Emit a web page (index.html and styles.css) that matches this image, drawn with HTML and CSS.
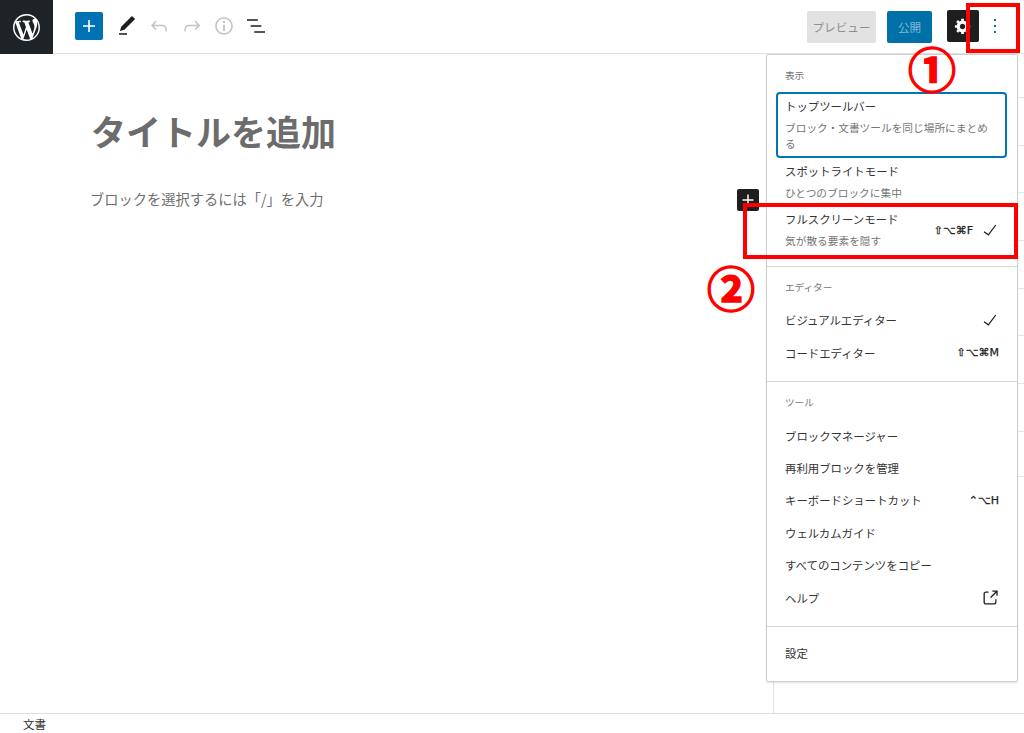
FILE: index.html
```html
<!DOCTYPE html>
<html lang="ja">
<head>
<meta charset="utf-8">
<title>エディター</title>
<link rel="stylesheet" href="styles.css">
</head>
<body>
<div class="page">
  <header class="topbar">
    <div class="logo"><svg class="logo-svg" viewBox="0 0 20 20"><path d="M20 10c0-5.51-4.49-10-10-10C4.48 0 0 4.49 0 10c0 5.52 4.48 10 10 10 5.51 0 10-4.48 10-10zM7.78 15.37L4.37 6.22c.55-.02 1.17-.08 1.17-.08.5-.06.44-1.13-.06-1.11 0 0-1.45.11-2.37.11-.18 0-.37 0-.58-.01C4.12 2.69 6.87 1.11 10 1.11c2.33 0 4.45.87 6.05 2.34-.68-.11-1.65.39-1.65 1.58 0 .74.45 1.36.9 2.1.35.61.55 1.36.55 2.46 0 1.49-1.4 5-1.4 5l-3.03-8.37c.54-.02.82-.17.82-.17.5-.05.44-1.25-.06-1.22 0 0-1.44.12-2.38.12-.87 0-2.33-.12-2.33-.12-.5-.03-.56 1.2-.06 1.22l.92.08 1.26 3.41zM17.41 10c.24-.64.74-1.87.43-4.25.7 1.29 1.05 2.71 1.05 4.25 0 3.29-1.73 6.24-4.4 7.78.97-2.59 1.94-5.2 2.92-7.78zM6.1 18.09C3.12 16.65 1.11 13.53 1.11 10c0-1.3.23-2.48.72-3.59C3.25 10.3 4.67 14.2 6.1 18.09zm4.03-6.63l2.58 6.98c-.86.29-1.76.45-2.71.45-.79 0-1.57-.11-2.29-.33.81-2.38 1.62-4.74 2.42-7.1z"/></svg></div>
    <div class="tools">
      <div class="add"><svg class="icon" viewBox="0 0 24 24"><path d="M18 11.2h-5.2V6h-1.6v5.2H6v1.6h5.2V18h1.6v-5.2H18z"/></svg></div>
      <div class="tool"><svg class="icon" viewBox="0 0 24 24"><path d="M20.1 5.1L16.9 2 6.2 12.7l-1.3 4.4 4.5-1.3L20.1 5.1zM4 20.8h8v-1.5H4v1.5z"/></svg></div>
      <div class="tool off"><svg class="icon" viewBox="0 0 24 24"><path d="M18.3 11.7c-.6-.6-1.4-.9-2.3-.9H6.7l2.9-3.3-1.1-1-4.5 5L8.5 16l1-1-2.7-2.7H16c.5 0 .9.2 1.3.5 1 1 1 3.4 1 4.5v.3h1.5v-.2c0-1.5 0-4.3-1.5-5.7z"/></svg></div>
      <div class="tool off"><svg class="icon" viewBox="0 0 24 24"><path d="M15.6 6.5l-1.1 1 2.9 3.3H8c-.9 0-1.7.3-2.3.9-1.4 1.5-1.4 4.2-1.4 5.6v.2h1.5v-.3c0-1.1 0-3.5 1-4.5.3-.3.7-.5 1.3-.5h9.2L14.5 15l1.1 1.1 4.6-4.6-4.6-5z"/></svg></div>
      <div class="tool off"><svg class="icon" viewBox="0 0 24 24"><path d="M12 3.2c-4.8 0-8.8 3.9-8.8 8.8 0 4.8 3.9 8.8 8.8 8.8 4.8 0 8.8-3.9 8.8-8.8 0-4.8-4-8.8-8.8-8.8zm0 16c-4 0-7.2-3.3-7.2-7.2C4.8 8 8 4.8 12 4.8s7.2 3.3 7.2 7.2c0 4-3.2 7.2-7.2 7.2zM11 17h2v-6h-2v6zm0-8h2V7h-2v2z"/></svg></div>
      <div class="tool"><svg class="icon" viewBox="0 0 24 24"><path d="M13.8 5.2H3v1.5h10.8V5.2zm-3.6 12v1.5H21v-1.5H10.2zm7.2-6H6.6v1.5h10.8v-1.5z"/></svg></div>
    </div>
    <div class="actions">
      <div class="btn preview">プレビュー</div>
      <div class="btn publish">公開</div>
      <div class="square dark"><svg class="cog" viewBox="0 0 20 20"><path d="M18 12h-2.18c-.17.7-.44 1.35-.81 1.93l1.54 1.54-2.1 2.1-1.54-1.54c-.58.36-1.23.63-1.91.79V19H8v-2.18c-.68-.16-1.33-.43-1.91-.79l-1.54 1.54-2.12-2.12 1.54-1.54c-.36-.58-.63-1.23-.79-1.91H1V9.03h2.17c.16-.7.44-1.35.8-1.94L2.43 5.55l2.1-2.1 1.54 1.54c.58-.37 1.24-.64 1.93-.81V2h3v2.18c.68.16 1.33.43 1.91.79l1.54-1.54 2.12 2.12-1.54 1.54c.36.59.64 1.24.8 1.94H18V12zm-8.5 1.5c1.66 0 3-1.34 3-3s-1.34-3-3-3-3 1.34-3 3 1.34 3 3 3z"/></svg></div>
      <div class="square more"><svg class="icon" viewBox="0 0 24 24"><path d="M13 19h-2v-2h2v2zm0-6h-2v-2h2v2zm0-6h-2V5h2v2z"/></svg></div>
    </div>
  </header>

  <div class="body">
    <main class="editor">
      <h1 class="post-title">タイトルを追加</h1>
      <p class="placeholder">ブロックを選択するには「/」を入力</p>
      <div class="block-add"><svg class="icon" viewBox="0 0 24 24"><path d="M18 11.2h-5.2V6h-1.6v5.2H6v1.6h5.2V18h1.6v-5.2H18z"/></svg></div>
    </main>
    <aside class="sidebar">
      <div class="row first"></div>
      <div class="row"></div>
      <div class="row"></div>
      <div class="row"></div>
      <div class="row"></div>
      <div class="row"></div>
      <div class="row"></div>
      <div class="row"></div>
      <div class="row last"></div>
    </aside>
  </div>

  <footer class="status">文書</footer>

  <nav class="menu">
    <section class="group view">
      <div class="label">表示</div>
      <div class="opt focused">
        <div class="opt-text"><div class="opt-title">トップツールバー</div><div class="opt-desc">ブロック・文書ツールを同じ場所にまとめる</div></div>
      </div>
      <div class="opt">
        <div class="opt-text"><div class="opt-title">スポットライトモード</div><div class="opt-desc">ひとつのブロックに集中</div></div>
      </div>
      <div class="opt">
        <div class="opt-text"><div class="opt-title">フルスクリーンモード</div><div class="opt-desc">気が散る要素を隠す</div></div>
        <span class="keys">⇧⌥⌘F</span>
        <svg class="check" viewBox="0 0 24 24"><path d="M18.3 5.6L9.9 16.9l-4.6-3.4-.9 1.2 5.8 4.3 9.3-12.6z"/></svg>
      </div>
    </section>
    <section class="group">
      <div class="label">エディター</div>
      <div class="item"><span>ビジュアルエディター</span><svg class="check" viewBox="0 0 24 24"><path d="M18.3 5.6L9.9 16.9l-4.6-3.4-.9 1.2 5.8 4.3 9.3-12.6z"/></svg></div>
      <div class="item"><span>コードエディター</span><span class="keys">⇧⌥⌘M</span></div>
    </section>
    <section class="group tool-group">
      <div class="label">ツール</div>
      <div class="item"><span>ブロックマネージャー</span></div>
      <div class="item"><span>再利用ブロックを管理</span></div>
      <div class="item"><span>キーボードショートカット</span><span class="keys">⌃⌥H</span></div>
      <div class="item"><span>ウェルカムガイド</span></div>
      <div class="item"><span>すべてのコンテンツをコピー</span></div>
      <div class="item"><span>ヘルプ</span><svg class="ext" viewBox="0 0 24 24"><path d="M18.2 17c0 .7-.6 1.2-1.2 1.2H7c-.7 0-1.2-.6-1.2-1.2V7c0-.7.6-1.2 1.2-1.2h3.2V4.2H7C5.5 4.2 4.2 5.5 4.2 7v10c0 1.5 1.2 2.8 2.8 2.8h10c1.5 0 2.8-1.2 2.8-2.8v-3.6h-1.5V17zM14.9 3v1.5h3.7l-6.4 6.4 1.1 1.1 6.4-6.4v3.7h1.5V3h-6.3z"/></svg></div>
    </section>
    <section class="group end">
      <div class="item"><span>設定</span></div>
    </section>
  </nav>

  <div class="mark mark-more"></div>
  <div class="mark mark-full"></div>
  <div class="num num-1">①</div>
  <div class="num num-2">②</div>
</div>
</body>
</html>
```

FILE: styles.css
```css
* { box-sizing: border-box; }
html, body { margin: 0; padding: 0; background: #fff; }
body {
  font-family: "Noto Sans CJK JP", "Noto Sans", sans-serif;
  color: #1e1e1e;
  overflow: hidden;
}
.page {
  position: relative;
  width: 1024px;
  height: 733px;
  display: flex;
  flex-direction: column;
  overflow: hidden;
}

/* top bar */
.topbar {
  height: 54px;
  flex: none;
  display: flex;
  align-items: flex-start;
  border-bottom: 1px solid #e0e0e0;
}
.logo {
  width: 53px;
  height: 54px;
  background: #1d2327;
  display: flex;
  align-items: center;
  justify-content: center;
  margin-bottom: -1px;
}
.logo-svg { width: 27px; height: 27px; fill: #fff; }
.icon { width: 24px; height: 24px; fill: currentColor; display: block; }
.tools {
  display: flex;
  align-items: center;
  height: 52px;
  padding-left: 22px;
}
.add {
  width: 28px;
  height: 28px;
  margin-right: 8px;
  background: #0071b3;
  color: #fff;
  border-radius: 2px;
  display: flex;
  align-items: center;
  justify-content: center;
}
.tool {
  width: 32.3px;
  height: 32px;
  display: flex;
  align-items: center;
  justify-content: center;
  color: #1e1e1e;
}
.tool.off { color: #c4c4c4; }
.actions {
  margin-left: auto;
  display: flex;
  align-items: center;
  height: 53px;
  padding-right: 13px;
}
.btn {
  height: 32px;
  border-radius: 2px;
  font-size: 11.6px;
  display: flex;
  align-items: center;
  justify-content: center;
}
.preview {
  width: 69px;
  margin-right: 11px;
  background: #e2e2e2;
  color: #8f8f8f;
}
.publish {
  width: 45px;
  margin-right: 15px;
  background: #0071a8;
  color: #82b7d4;
}
.square {
  width: 32px;
  height: 32px;
  border-radius: 2px;
  display: flex;
  align-items: center;
  justify-content: center;
}
.dark { background: #1e1e1e; color: #fff; margin-top: -2px; }
.cog { width: 18px; height: 18px; fill: #fff; }
.more { color: #0075b0; margin-top: -2px; }

/* body */
.body { flex: 1; display: flex; min-height: 0; }
.editor {
  position: relative;
  flex: 1;
  padding: 52px 0 0 91px;
}
.post-title {
  margin: 0;
  font-size: 35px;
  line-height: 50px;
  font-weight: 700;
  color: #6c6c6c;
}
.placeholder {
  margin: 33px 0 0 -1px;
  font-size: 14.25px;
  line-height: 20px;
  color: #6f6f6f;
}
.block-add {
  position: absolute;
  left: 737px;
  top: 135px;
  width: 22px;
  height: 22px;
  background: #1e1e1e;
  color: #fff;
  border-radius: 2px;
  display: flex;
  align-items: center;
  justify-content: center;
}
.sidebar {
  width: 251px;
  flex: none;
  border-left: 1px solid #e0e0e0;
}
.row { height: 47.7px; border-bottom: 1px solid #e6e6e6; }
.row.first { height: 44px; }
.row.last { height: 45px; }

/* status bar */
.status {
  height: 20px;
  flex: none;
  border-top: 1px solid #e0e0e0;
  padding-left: 23px;
  font-size: 11.5px;
  line-height: 21px;
  color: #333;
}

/* options menu */
.menu {
  position: absolute;
  left: 766px;
  top: 54px;
  width: 252px;
  height: 628px;
  background: #fff;
  border: 1px solid #d0d0d0;
  border-radius: 2px;
  box-shadow: 0 1px 2px rgba(0, 0, 0, .12);
}
.group {
  padding: 13px 10px 12px 9px;
  border-bottom: 1px solid #d6d6d6;
}
.group.end { border-bottom: 0; padding-top: 10px; }
.label {
  padding-left: 9px;
  margin-bottom: 10px;
  font-size: 9.6px;
  line-height: 14px;
  color: #757575;
}
.tool-group .label { margin-bottom: 10.6px; }
.opt {
  display: flex;
  align-items: center;
  height: 48px;
  padding: 0 9px;
}
.opt.focused {
  height: 66px;
  border: 2px solid #0076b4;
  border-radius: 4px;
  padding: 0 7px;
}
.opt-text { flex: 1; min-width: 0; }
.opt-title { font-size: 11.4px; line-height: 16px; color: #333; }
.opt-desc { margin-top: 6px; font-size: 10.7px; line-height: 16px; color: #757575; }
.item {
  height: 32.4px;
  display: flex;
  align-items: center;
  justify-content: space-between;
  padding: 0 9px;
  font-size: 11.4px;
  color: #333;
}
.keys {
  font-family: "DejaVu Sans", sans-serif;
  font-size: 11px;
  font-weight: 400;
  color: #222;
  white-space: nowrap;
  -webkit-text-stroke: .25px #222;
  margin-right: -1px;
}
.check { width: 20px; height: 20px; fill: #1e1e1e; flex: none; margin-left: 8px; margin-right: -2px; }
.ext { width: 20px; height: 20px; fill: #1e1e1e; flex: none; margin-right: -2px; }

/* annotations */
.mark { position: absolute; border: 4px solid #f00; }
.mark-more { left: 966px; top: 3px; width: 54px; height: 50px; }
.mark-full { left: 743px; top: 203px; width: 275px; height: 56px; }
.num {
  position: absolute;
  font-size: 48px;
  line-height: 48px;
  width: 50px;
  text-align: center;
  font-weight: 700;
  color: #f00;
  -webkit-text-stroke: 1.5px #f00;
}
.num-1 { left: 907px; top: 43px; }
.num-2 { left: 706px; top: 262px; }
```
